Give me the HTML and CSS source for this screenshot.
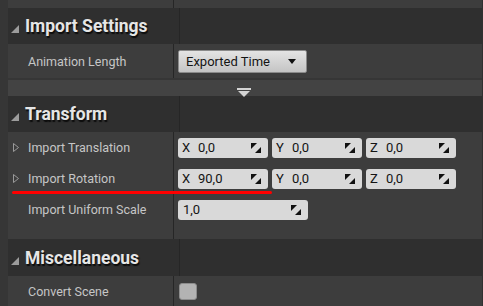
FILE: index.html
```html
<!DOCTYPE html>
<html lang="en">
<head>
    <meta charset="UTF-8">
    <title>Import Options</title>
    <link rel="stylesheet" href="styles.css">
</head>
<body>
    <div class="panel">
        <div class="row row-top">
            <div class="name"></div>
            <div class="value"></div>
        </div>

        <div class="cat-header">
            <span class="cat-arrow"></span>
            <span class="cat-title">Import Settings</span>
            <span class="cat-split"></span>
        </div>
        <div class="row row-tall">
            <div class="name">Animation Length</div>
            <div class="value">
                <div class="combo">
                    <span>Exported Time</span>
                    <span class="combo-arrow"></span>
                </div>
            </div>
        </div>
        <div class="advanced">
            <svg width="14" height="9" viewBox="0 0 14 9"><rect x="0" y="0" width="14" height="2" fill="#d4d4d4"/><polygon points="1,3 13,3 7,9" fill="#d4d4d4"/></svg>
        </div>

        <div class="cat-header">
            <span class="cat-arrow"></span>
            <span class="cat-title">Transform</span>
            <span class="cat-split"></span>
        </div>
        <div class="row">
            <div class="name"><svg class="expander" width="6" height="9" viewBox="0 0 6 9"><polygon points="0.5,0.5 5.5,4.5 0.5,8.5"/></svg>Import Translation</div>
            <div class="value">
                <div class="num"><span class="axis">X</span>0,0<svg class="spin" width="10" height="10" viewBox="0 0 10 10"><polygon points="0,0 6,0 0,6"/><polygon points="10,4 10,10 4,10"/></svg></div>
                <div class="num"><span class="axis">Y</span>0,0<svg class="spin" width="10" height="10" viewBox="0 0 10 10"><polygon points="0,0 6,0 0,6"/><polygon points="10,4 10,10 4,10"/></svg></div>
                <div class="num"><span class="axis">Z</span>0,0<svg class="spin" width="10" height="10" viewBox="0 0 10 10"><polygon points="0,0 6,0 0,6"/><polygon points="10,4 10,10 4,10"/></svg></div>
            </div>
        </div>
        <div class="row">
            <div class="name"><svg class="expander" width="6" height="9" viewBox="0 0 6 9"><polygon points="0.5,0.5 5.5,4.5 0.5,8.5"/></svg>Import Rotation</div>
            <div class="value">
                <div class="num"><span class="axis">X</span>90,0<svg class="spin" width="10" height="10" viewBox="0 0 10 10"><polygon points="0,0 6,0 0,6"/><polygon points="10,4 10,10 4,10"/></svg></div>
                <div class="num"><span class="axis">Y</span>0,0<svg class="spin" width="10" height="10" viewBox="0 0 10 10"><polygon points="0,0 6,0 0,6"/><polygon points="10,4 10,10 4,10"/></svg></div>
                <div class="num"><span class="axis">Z</span>0,0<svg class="spin" width="10" height="10" viewBox="0 0 10 10"><polygon points="0,0 6,0 0,6"/><polygon points="10,4 10,10 4,10"/></svg></div>
            </div>
        </div>
        <div class="row">
            <div class="name">Import Uniform Scale</div>
            <div class="value">
                <div class="num num-wide">1,0<svg class="spin" width="10" height="10" viewBox="0 0 10 10"><polygon points="0,0 6,0 0,6"/><polygon points="10,4 10,10 4,10"/></svg></div>
            </div>
        </div>
        <div class="row row-spacer">
            <div class="name"></div>
            <div class="value"></div>
        </div>

        <div class="cat-header cat-misc">
            <span class="cat-arrow"></span>
            <span class="cat-title">Miscellaneous</span>
            <span class="cat-split"></span>
        </div>
        <div class="row">
            <div class="name">Convert Scene</div>
            <div class="value">
                <div class="checkbox"></div>
            </div>
        </div>
    </div>

    <div class="underline"></div>
</body>
</html>
```

FILE: styles.css
```css
body {
    margin: 0;
    background: #363636;
    font-family: Roboto, "Liberation Sans", sans-serif;
    overflow: hidden;
}

.panel {
    margin-left: 8px;
    width: 474px;
    border-right: 1px solid #303030;
}

.row {
    display: flex;
    height: 31px;
    background: #3d3d3d;
}

.row-top {
    height: 8px;
}

.row-tall {
    height: 34px;
}

.row-spacer {
    height: 14px;
}

.name {
    width: 165px;
    display: flex;
    align-items: center;
    padding-left: 20px;
    box-sizing: border-box;
    color: #c6c6c6;
    font-size: 12.5px;
}

.value {
    flex: 1;
    display: flex;
    align-items: center;
    gap: 4px;
    padding-left: 4px;
    border-left: 1px solid #262626;
}

.expander {
    margin-left: -15px;
    margin-right: 9px;
    fill: none;
    stroke: #9a9a9a;
    stroke-width: 1;
}

.cat-header {
    display: flex;
    align-items: center;
    height: 36px;
    background: #2f2f2f;
}

.cat-misc {
    height: 37px;
}

.cat-arrow {
    width: 0;
    height: 0;
    margin-left: 3px;
    margin-top: 6px;
    border-bottom: 8px solid #9c9c9c;
    border-left: 8px solid transparent;
}

.cat-title {
    width: 154px;
    padding-left: 6px;
    color: #e6e6e6;
    font-size: 17.5px;
    font-weight: bold;
    text-shadow: 1px 2px 1px #0c0c0c;
}

.cat-split {
    align-self: stretch;
    border-left: 1px solid #262626;
}

.combo {
    width: 129px;
    height: 23px;
    box-sizing: border-box;
    display: flex;
    align-items: center;
    justify-content: space-between;
    padding: 0 10px 0 7px;
    background: linear-gradient(#e4e4e4, #c4c4c4);
    border: 1px solid #8a8a8a;
    border-radius: 2px;
    color: #141414;
    font-size: 13px;
}

.combo-arrow {
    border-left: 4px solid transparent;
    border-right: 4px solid transparent;
    border-top: 5px solid #111;
}

.advanced {
    margin-top: 2px;
    height: 16px;
    box-sizing: border-box;
    padding: 2px 0 0 229px;
    background: #434343;
}

.num {
    width: 90px;
    height: 20px;
    box-sizing: border-box;
    display: flex;
    align-items: center;
    padding: 0 7px 0 4px;
    background: #d9d9d9;
    border-radius: 3px;
    color: #141414;
    font-size: 13px;
}

.num-wide {
    width: 130px;
    padding-left: 5px;
}

.axis {
    width: 16px;
}

.spin {
    margin-left: auto;
    fill: #111;
}

.checkbox {
    width: 18px;
    height: 17px;
    margin-left: 1px;
    box-sizing: border-box;
    background: #b3b3b3;
    border: 1px solid #8c8c8c;
    border-radius: 3px;
}

.underline {
    position: absolute;
    left: 12px;
    top: 191px;
    width: 260px;
    height: 3px;
    background: #ff0000;
    border-radius: 2px;
}
```
